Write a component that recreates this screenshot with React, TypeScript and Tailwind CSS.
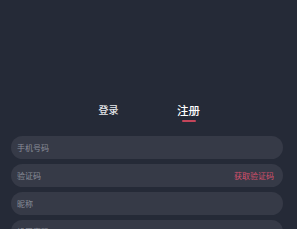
const font = { fontFamily: '"Noto Sans CJK SC", "Noto Sans", sans-serif' }

const fields = [
  { placeholder: '手机号码' },
  { placeholder: '验证码', action: '获取验证码' },
  { placeholder: '昵称' },
  { placeholder: '设置密码' },
]

export default function App() {
  return (
    <div className="h-[229px] w-[297px] overflow-hidden bg-[#252a37]" style={font}>
      <div className="flex justify-center pt-[102px]">
        <div className="flex w-[80px] flex-col items-center">
          <span className="text-[10px] font-medium leading-[16px] text-[#e6e7ea]">登录</span>
        </div>
        <div className="flex w-[80px] flex-col items-center">
          <span className="text-[11.5px] font-medium leading-[16px] text-white">注册</span>
          <div className="mt-[2px] h-[2px] w-[14px] rounded-full bg-[#c4455a]" />
        </div>
      </div>
      <div className="mt-[14px] flex flex-col gap-[5px] pl-[11px] pr-[14px]">
        {fields.map((f) => (
          <div
            key={f.placeholder}
            className="flex h-[23px] items-center justify-between rounded-full bg-[#363a47] pl-[6px] pr-[9px]"
          >
            <span className="text-[8px] text-[#8b8f9a]">{f.placeholder}</span>
            {f.action && <span className="text-[8px] text-[#d4506c]">{f.action}</span>}
          </div>
        ))}
      </div>
    </div>
  )
}
